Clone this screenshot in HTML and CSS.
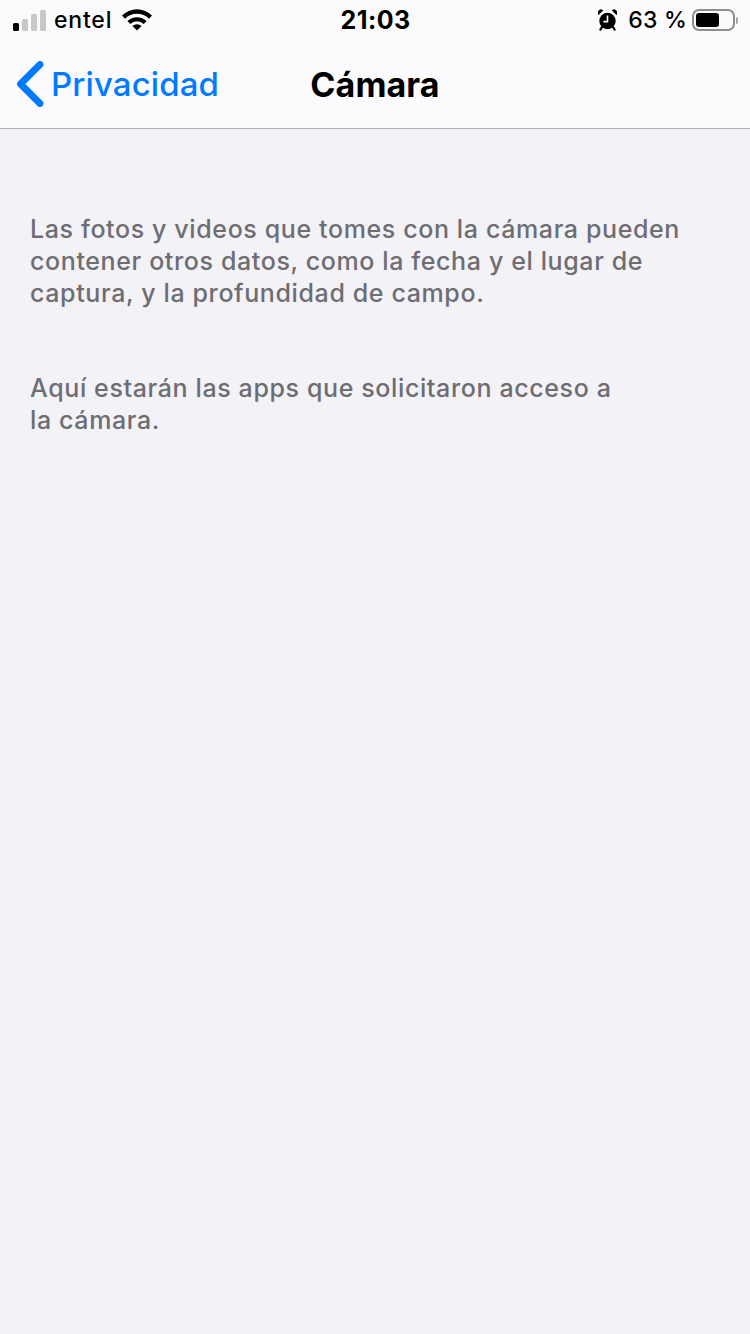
FILE: index.html
```html
<!DOCTYPE html>
<html lang="es">
<head>
<meta charset="UTF-8">
<meta name="viewport" content="width=device-width, initial-scale=1.0">
<title>Cámara</title>
<link rel="stylesheet" href="styles.css">
</head>
<body>

<header class="top-bar">
    <div class="status-bar">
        <div class="status-side">
            <div class="signal">
                <span class="bar bar-1 on"></span>
                <span class="bar bar-2"></span>
                <span class="bar bar-3"></span>
                <span class="bar bar-4"></span>
            </div>
            <span class="carrier">entel</span>
            <svg class="wifi" width="30" height="22" viewBox="0 0 30 22">
                <path d="M0 6.6 A21 21 0 0 1 30 6.6 L27 9.8 A16.6 16.6 0 0 0 3 9.8 Z" fill="#000"/>
                <path d="M5.4 12 A14 14 0 0 1 24.6 12 L21.7 15 A9.6 9.6 0 0 0 8.3 15 Z" fill="#000"/>
                <path d="M10.4 17 A6.6 6.6 0 0 1 19.6 17 L15 21.6 Z" fill="#000"/>
            </svg>
        </div>
        <div class="clock">21:03</div>
        <div class="status-side status-right">
            <svg class="alarm" width="19" height="22" viewBox="0 0 19 22">
                <circle cx="9.5" cy="12" r="8.2" fill="#000"/>
                <path d="M0.6 5.6 L4.8 1.4 A3 3 0 0 0 0.6 5.6 Z M18.4 5.6 L14.2 1.4 A3 3 0 0 1 18.4 5.6 Z" fill="#000" stroke="#000"/>
                <path d="M4 18 L2.4 20.6 M15 18 L16.6 20.6" stroke="#000" stroke-width="2.2" stroke-linecap="round"/>
                <path d="M9.5 6.5 V12.6 H5.4" fill="none" stroke="#fff" stroke-width="1.6"/>
            </svg>
            <span class="percent">63 %</span>
            <div class="battery">
                <div class="battery-level"></div>
            </div>
            <div class="battery-cap"></div>
        </div>
    </div>
    <nav class="nav-bar">
        <div class="back">
            <svg class="chevron" width="28" height="46" viewBox="0 0 28 46">
                <path d="M24 3.5 L4.5 23 L24 42.5" fill="none" stroke="#007aff" stroke-width="6.8" stroke-linecap="round" stroke-linejoin="round"/>
            </svg>
            <span class="back-label">Privacidad</span>
        </div>
        <h1 class="nav-title">Cámara</h1>
    </nav>
</header>

<main class="content">
    <p class="note">Las fotos y videos que tomes con la cámara pueden<br>contener otros datos, como la fecha y el lugar de<br>captura, y la profundidad de campo.</p>
    <p class="note">Aquí estarán las apps que solicitaron acceso a<br>la cámara.</p>
</main>

</body>
</html>
```

FILE: styles.css
```css
html, body {
    height: 100%;
}
body {
    margin: 0;
    font-family: Inter, "Liberation Sans", Arial, sans-serif;
    background-color: #f2f2f7;
    overflow: hidden;
}
.top-bar {
    height: 128px;
    background-color: #fbfbfd;
    border-bottom: 1px solid #b2b2b6;
}
.status-bar {
    height: 40px;
    display: grid;
    grid-template-columns: 1fr auto 1fr;
    align-items: center;
    padding: 0 12px 0 13px;
}
.status-side {
    display: flex;
    align-items: center;
}
.status-right {
    justify-content: flex-end;
}
.signal {
    display: flex;
    align-items: flex-end;
    gap: 3px;
    height: 22px;
}
.bar {
    width: 6px;
    border-radius: 1.5px;
    background-color: #c8c8ca;
}
.bar.on {
    background-color: #000;
}
.bar-1 { height: 8px; }
.bar-2 { height: 12px; }
.bar-3 { height: 17px; }
.bar-4 { height: 21px; }
.carrier {
    margin-left: 8px;
    font-size: 23px;
    font-weight: 500;
    letter-spacing: 0.8px;
    color: #000;
}
.wifi {
    margin-left: 10px;
}
.clock {
    font-size: 25px;
    font-weight: 700;
    letter-spacing: 0.4px;
    color: #000;
}
.alarm {
    margin-right: 11px;
}
.percent {
    font-size: 23px;
    font-weight: 500;
    letter-spacing: 0.2px;
    color: #000;
    margin-right: 5px;
}
.battery {
    width: 43px;
    height: 22px;
    box-sizing: border-box;
    border: 2px solid #8e8e90;
    border-radius: 7px;
    padding: 2px;
}
.battery-level {
    width: 65%;
    height: 100%;
    background-color: #000;
    border-radius: 3px;
}
.battery-cap {
    width: 2px;
    height: 7px;
    margin-left: 1px;
    background-color: #a5a5a7;
    border-radius: 0 2px 2px 0;
}
.nav-bar {
    height: 88px;
    display: flex;
    align-items: center;
    justify-content: center;
    position: relative;
}
.back {
    position: absolute;
    left: 16px;
    top: 21px;
    display: flex;
    align-items: center;
}
.back-label {
    margin-left: 7px;
    font-size: 33px;
    font-weight: 500;
    letter-spacing: 0.1px;
    color: #007aff;
}
.nav-title {
    margin: 0;
    font-size: 34px;
    font-weight: 700;
    letter-spacing: 0.1px;
    color: #000;
}
.content {
    padding: 84px 30px 0;
}
.note {
    margin: 0 0 63px;
    font-size: 25px;
    font-weight: 500;
    line-height: 32px;
    letter-spacing: 0.62px;
    color: #6d6d72;
}
```
